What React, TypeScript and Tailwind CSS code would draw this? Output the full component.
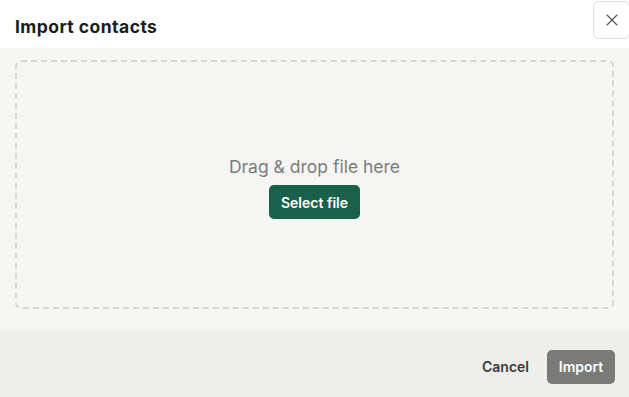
import { X } from "lucide-react";

export default function App() {
  return (
    <div className="w-[629px] h-[397px] bg-white flex flex-col overflow-hidden font-['Inter',sans-serif]">
      {/* Header */}
      <div className="h-[48px] flex items-start justify-between shrink-0">
        <h1 className="pl-[15px] pt-[16px] text-[17.5px] leading-[22px] font-bold text-[#1c1c1c] tracking-[0.45px]">
          Import contacts
        </h1>
        <button className="mt-[1px] mr-[-1px] w-[37px] h-[38px] flex items-center justify-center border border-[#dcdcdc] rounded-[6px] text-[#555]">
          <X size={20} strokeWidth={1.4} />
        </button>
      </div>

      {/* Body */}
      <div className="h-[282px] bg-[#f5f5f3] px-[15px] pt-[12px] pb-[21px] shrink-0">
        <div className="h-full border-2 border-dashed border-[#d6d6d4] rounded-[6px] flex flex-col items-center justify-center pt-[6px]">
          <p className="text-[17.5px] leading-[22px] text-[#7b7b7b]">Drag &amp; drop file here</p>
          <button className="mt-[7px] w-[91px] h-[34px] rounded-[5px] bg-[#1a614c] text-white text-[14px] font-semibold">
            Select file
          </button>
        </div>
      </div>

      {/* Footer */}
      <div className="flex-1 bg-[#eeeeec] flex items-center justify-end gap-[18px] pr-[14px] pt-[6px]">
        <button className="text-[14px] font-semibold text-[#3a3a3a]">Cancel</button>
        <button className="w-[68px] h-[34px] rounded-[5px] bg-[#7a7a78] text-white text-[14px] font-semibold">
          Import
        </button>
      </div>
    </div>
  );
}
